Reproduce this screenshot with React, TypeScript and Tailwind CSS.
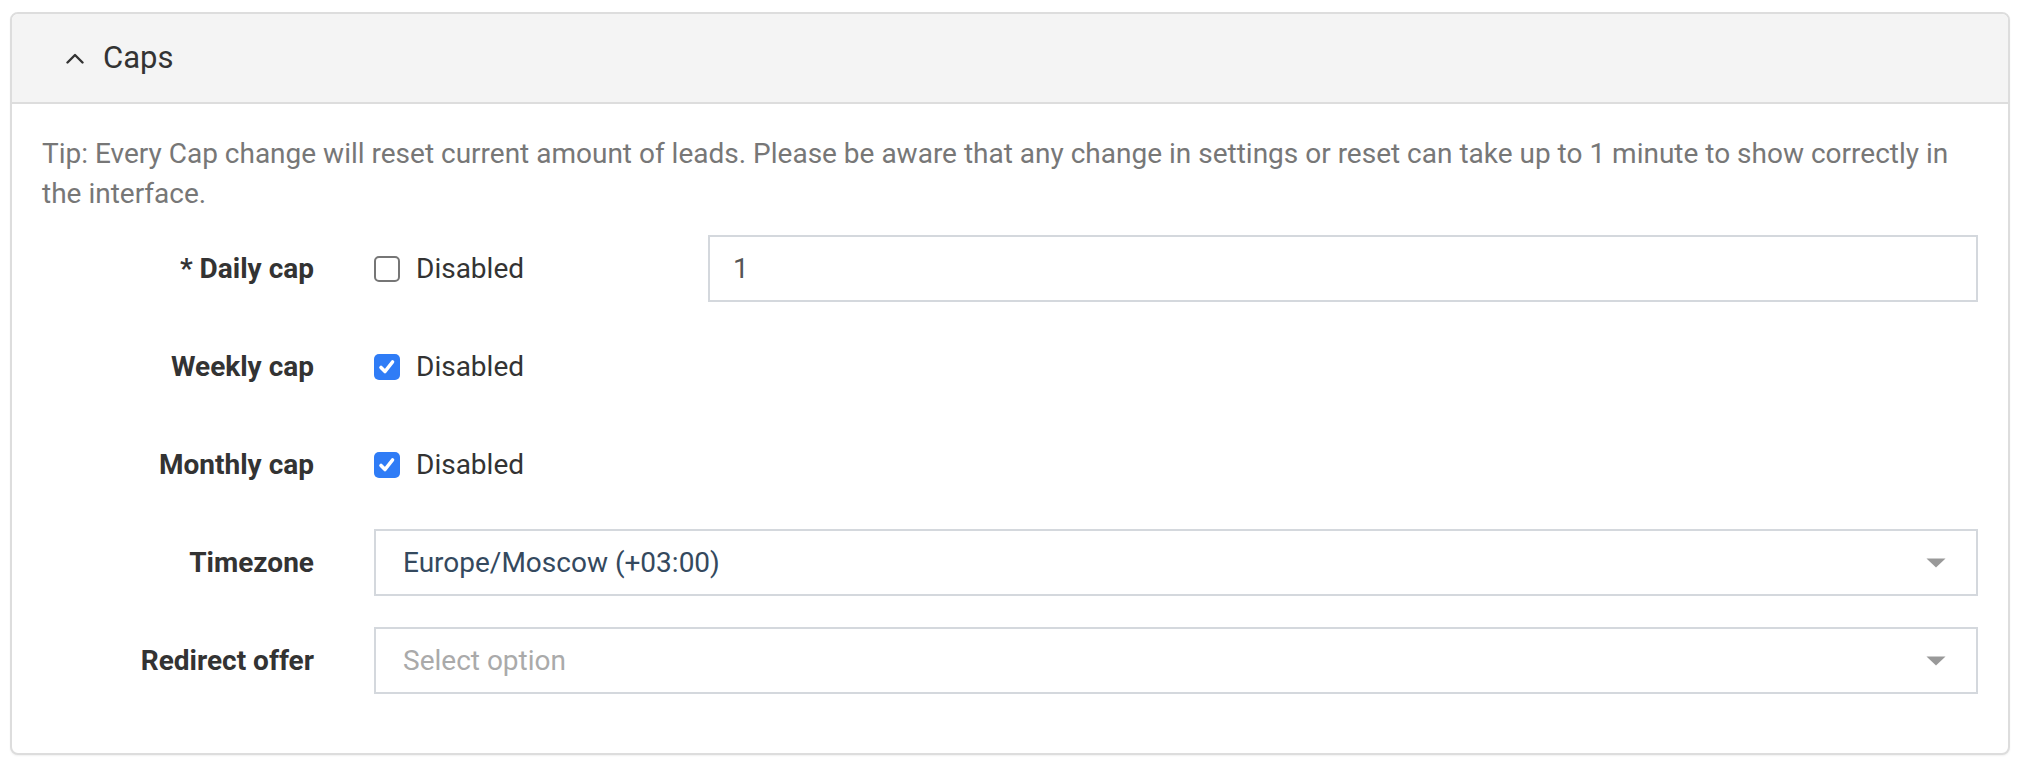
import React from "react";

function Check({ checked }: { checked: boolean }) {
  if (checked) {
    return (
      <span className="flex h-[26px] w-[26px] items-center justify-center rounded-[5px] bg-[#2f7cf6]">
        <svg width="20" height="20" viewBox="0 0 20 20" fill="none">
          <path d="M4 10.5 L8 14.5 L15.5 5" stroke="#fff" strokeWidth="3.6" strokeLinecap="round" strokeLinejoin="round" />
        </svg>
      </span>
    );
  }
  return <span className="block h-[26px] w-[26px] rounded-[5px] border-2 border-[#767676] bg-white" />;
}

function Label({ children }: { children: React.ReactNode }) {
  return <div className="w-[272px] shrink-0 text-right text-[28px] font-bold text-[#333]">{children}</div>;
}

function CheckWithText({ checked }: { checked: boolean }) {
  return (
    <div className="flex items-center gap-[16px]">
      <Check checked={checked} />
      <span className="text-[28px] text-[#333]">Disabled</span>
    </div>
  );
}

function Arrow() {
  return (
    <svg width="20" height="10" viewBox="0 0 20 10" className="shrink-0">
      <path d="M0.5 0.5 L19.5 0.5 L10 9.5 Z" fill="#999" />
    </svg>
  );
}

export default function App() {
  return (
    <div className="min-h-[766px] bg-white pl-[10px] pt-[12px]" style={{ fontFamily: "Roboto, 'Noto Sans', sans-serif" }}>
      <div className="w-[2000px] overflow-hidden rounded-[8px] border-2 border-[#dddddd] bg-white shadow-[0_1px_2px_rgba(0,0,0,0.06)]">
        <div className="flex h-[90px] items-center border-b-2 border-[#dddddd] bg-[#f4f4f4] pl-[54px]">
          <svg width="18" height="11" viewBox="0 0 18 11" fill="none">
            <path d="M1.5 9.5 L9 2 L16.5 9.5" stroke="#333" strokeWidth="2.4" strokeLinecap="round" strokeLinejoin="round" />
          </svg>
          <span className="ml-[19px] text-[31px] text-[#333]">Caps</span>
        </div>
        <div className="px-[30px] pb-[59px] pt-[30px]">
          <p className="text-[28px] leading-[40px] text-[#777]">
            Tip: Every Cap change will reset current amount of leads. Please be aware that any change in settings or reset can take up to 1 minute to show correctly in the interface.
          </p>
          <div className="mt-[21px] flex flex-col gap-[31px]">
            <div className="flex h-[67px] items-center">
              <Label>* Daily cap</Label>
              <div className="ml-[60px] w-[272px] shrink-0">
                <CheckWithText checked={false} />
              </div>
              <div className="ml-[62px] flex h-[67px] flex-1 items-center border-2 border-[#d4d8dd] pl-[23px] text-[28px] text-[#555]">
                1
              </div>
            </div>
            <div className="flex h-[67px] items-center">
              <Label>Weekly cap</Label>
              <div className="ml-[60px]">
                <CheckWithText checked={true} />
              </div>
            </div>
            <div className="flex h-[67px] items-center">
              <Label>Monthly cap</Label>
              <div className="ml-[60px]">
                <CheckWithText checked={true} />
              </div>
            </div>
            <div className="flex h-[67px] items-center">
              <Label>Timezone</Label>
              <div className="ml-[60px] flex h-[67px] flex-1 items-center justify-between border-2 border-[#d4d8dd] pl-[27px] pr-[30px]">
                <span className="text-[28px] text-[#34495e]">Europe/Moscow (+03:00)</span>
                <Arrow />
              </div>
            </div>
            <div className="flex h-[67px] items-center">
              <Label>Redirect offer</Label>
              <div className="ml-[60px] flex h-[67px] flex-1 items-center justify-between border-2 border-[#d4d8dd] pl-[27px] pr-[30px]">
                <span className="text-[28px] text-[#aaaaaa]">Select option</span>
                <Arrow />
              </div>
            </div>
          </div>
        </div>
      </div>
    </div>
  );
}
